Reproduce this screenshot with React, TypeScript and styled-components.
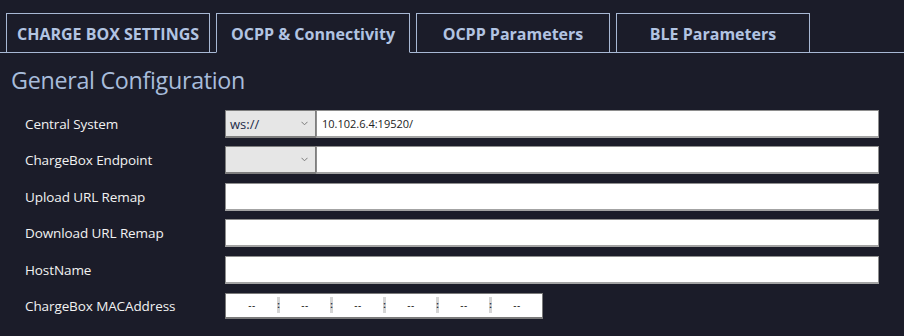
import React from 'react';
import styled, { createGlobalStyle } from 'styled-components';

const GlobalStyle = createGlobalStyle`
  html, body {
    margin: 0;
    padding: 0;
    background: #1b1c29;
  }
  body {
    font-family: "Open Sans", "Noto Sans", sans-serif;
  }
`;

const Page = styled.div`
  width: 904px;
  height: 336px;
  background: #1b1c29;
  overflow: hidden;
`;

const TabStrip = styled.div`
  display: flex;
  gap: 6px;
  padding: 13px 0 0 6px;
  border-bottom: 1px solid #a8b8d4;
  height: 39px;
  box-sizing: content-box;
`;

const Tab = styled.div<{ $active?: boolean; $wide?: boolean }>`
  box-sizing: border-box;
  height: ${p => (p.$active ? '40px' : '39px')};
  margin-bottom: ${p => (p.$active ? '-1px' : '0')};
  width: ${p => (p.$wide ? '204px' : '194px')};
  border: 1px solid #a8b8d4;
  border-bottom: ${p => (p.$active ? '1px solid #1b1c29' : 'none')};
  display: flex;
  align-items: center;
  justify-content: center;
  padding-top: 2px;
  color: #b2c4e2;
  font-weight: 700;
  font-size: 16px;
  white-space: nowrap;
`;

const Heading = styled.h2`
  margin: 10px 0 0 11px;
  height: 45px;
  font-weight: 400;
  font-size: 23.3px;
  line-height: 34px;
  color: #a8bcdb;
  letter-spacing: -0.3px;
`;

const Form = styled.div`
  display: flex;
  flex-direction: column;
  gap: 8.4px;
  padding: 2px 0 0 25px;
`;

const Row = styled.div`
  display: flex;
  align-items: center;
  height: 28px;
`;

const Label = styled.label`
  width: 200px;
  flex: none;
  color: #f2f2f2;
  font-size: 13.5px;
  letter-spacing: -0.1px;
`;

const Field = styled.div`
  display: flex;
  width: 654px;
  height: 28px;
`;

const SelectBox = styled.div`
  box-sizing: border-box;
  width: 91px;
  height: 28px;
  flex: none;
  background: #e6e6e6;
  border: 1px solid #7e7e7e;
  border-bottom-width: 2px;
  display: flex;
  align-items: center;
  justify-content: space-between;
  padding: 0 7px 0 4px;
  color: #1c2a48;
  font-size: 13px;
`;

const TextBox = styled.div`
  box-sizing: border-box;
  flex: 1;
  height: 28px;
  background: #fff;
  border: 1px solid #8e8e8e;
  border-bottom: 2px solid #a3a3a3;
  display: flex;
  align-items: center;
  padding-left: 5px;
  color: #222;
  font-size: 11px;
`;

const MacBox = styled.div`
  box-sizing: border-box;
  width: 318px;
  height: 26px;
  background: #fff;
  border: 1px solid #7a7a7a;
  border-bottom-width: 2px;
  display: flex;
  align-items: center;
  padding-left: 1px;
`;

const MacPart = styled.span`
  width: 50px;
  text-align: center;
  color: #111;
  font-size: 10px;
  letter-spacing: 0.5px;
`;

const MacSep = styled.span`
  width: 3px;
  height: 16px;
  background: #d5d5d5;
  color: #0f1a30;
  font-size: 9px;
  font-weight: 700;
  line-height: 15px;
  text-align: center;
  overflow: hidden;
`;

const Chevron = () => (
  <svg width="7" height="5" viewBox="0 0 7 5">
    <path d="M0.5 0.8 L3.5 3.8 L6.5 0.8" fill="none" stroke="#7a7a7a" strokeWidth="1" />
  </svg>
);

const tabs = ['CHARGE BOX SETTINGS', 'OCPP & Connectivity', 'OCPP Parameters', 'BLE Parameters'];

export default function App() {
  const mac = ['--', '--', '--', '--', '--', '--'];
  return (
    <Page>
      <GlobalStyle />
      <TabStrip>
        {tabs.map((t, i) => (
          <Tab key={t} $active={i === 1} $wide={i === 0}>
            {t}
          </Tab>
        ))}
      </TabStrip>
      <Heading>General Configuration</Heading>
      <Form>
        <Row>
          <Label>Central System</Label>
          <Field>
            <SelectBox>
              <span>ws://</span>
              <Chevron />
            </SelectBox>
            <TextBox>10.102.6.4:19520/</TextBox>
          </Field>
        </Row>
        <Row>
          <Label>ChargeBox Endpoint</Label>
          <Field>
            <SelectBox>
              <span />
              <Chevron />
            </SelectBox>
            <TextBox />
          </Field>
        </Row>
        <Row>
          <Label>Upload URL Remap</Label>
          <Field>
            <TextBox />
          </Field>
        </Row>
        <Row>
          <Label>Download URL Remap</Label>
          <Field>
            <TextBox />
          </Field>
        </Row>
        <Row>
          <Label>HostName</Label>
          <Field>
            <TextBox />
          </Field>
        </Row>
        <Row>
          <Label>ChargeBox MACAddress</Label>
          <MacBox>
            {mac.map((m, i) => (
              <React.Fragment key={i}>
                {i > 0 && <MacSep>:</MacSep>}
                <MacPart>{m}</MacPart>
              </React.Fragment>
            ))}
          </MacBox>
        </Row>
      </Form>
    </Page>
  );
}
